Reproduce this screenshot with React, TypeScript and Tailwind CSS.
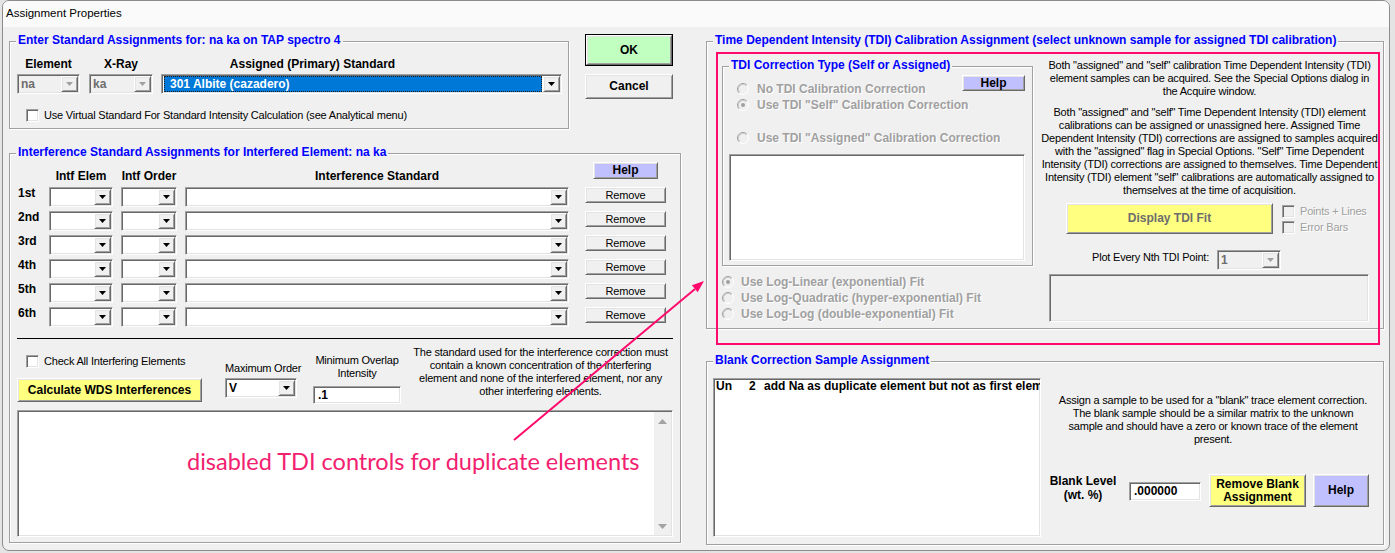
import React from "react";

const BOLD = "font-['Liberation_Sans',Arial,sans-serif] font-bold text-[12px] leading-[15px]";
const REG = "font-['Liberation_Sans',Arial,sans-serif] text-[11px] leading-[13px] tracking-[-0.2px]";
const SUNKEN =
  "border border-t-[#a0a0a0] border-l-[#a0a0a0] border-r-white border-b-white shadow-[inset_1px_1px_0_#696969,inset_-1px_-1px_0_#e3e3e3]";
const RAISED =
  "border border-t-white border-l-white border-r-[#696969] border-b-[#696969] shadow-[inset_1px_1px_0_#e3e3e3,inset_-1px_-1px_0_#a0a0a0]";
const DIS = "text-[#a0a0a0] [text-shadow:1px_1px_0_#fff]";

function Tri({ color = "#000" }: { color?: string }) {
  return (
    <svg width="7" height="4" viewBox="0 0 7 4">
      <polygon points="0,0 7,0 3.5,4" fill={color} />
    </svg>
  );
}

function DropBtn({ disabled = false }: { disabled?: boolean }) {
  return (
    <div className={`${RAISED} w-[17px] h-full shrink-0 bg-[#f0f0f0] flex items-center justify-center`}>
      <Tri color={disabled ? "#a0a0a0" : "#000"} />
    </div>
  );
}

function Combo({
  className = "",
  value = "",
  disabled = false,
  selected = false,
}: {
  className?: string;
  value?: string;
  disabled?: boolean;
  selected?: boolean;
}) {
  return (
    <div className={`${SUNKEN} p-[1px] h-[20px] flex shrink-0 ${disabled ? "bg-[#f0f0f0]" : "bg-white"} ${className}`}>
      {selected ? (
        <div className="flex-1 ml-[1px] mr-[1px] border border-dotted border-[#1e1e1e] bg-[#0078d7] text-white pl-[5px] flex items-center overflow-hidden">
          <span className={`${BOLD} whitespace-nowrap`}>{value}</span>
        </div>
      ) : (
        <div className={`flex-1 pl-[2px] flex items-center overflow-hidden ${disabled ? "text-[#6d6d6d]" : "text-black"}`}>
          <span className={`${BOLD} whitespace-nowrap`}>{value}</span>
        </div>
      )}
      <DropBtn disabled={disabled} />
    </div>
  );
}

function TextBox({ className = "", value = "" }: { className?: string; value?: string }) {
  return (
    <div className={`${SUNKEN} bg-white pl-[4px] pt-[1px] flex items-start overflow-hidden shrink-0 ${className}`}>
      <span className={`${BOLD} text-black whitespace-nowrap`}>{value}</span>
    </div>
  );
}

function CheckBox({ disabled = false }: { disabled?: boolean }) {
  return <div className={`${SUNKEN} w-[13px] h-[13px] shrink-0 ${disabled ? "bg-[#f0f0f0]" : "bg-white"}`} />;
}

function Check({ label, disabled = false, className = "" }: { label: string; disabled?: boolean; className?: string }) {
  return (
    <div className={`flex items-center h-[13px] ${className}`}>
      <CheckBox disabled={disabled} />
      <span className={`${REG} ml-[5px] whitespace-nowrap ${disabled ? DIS : "text-black"}`}>{label}</span>
    </div>
  );
}

function Radio({
  label,
  checked = false,
  gap = "ml-[8px]",
  className = "",
}: {
  label: string;
  checked?: boolean;
  gap?: string;
  className?: string;
}) {
  return (
    <div className={`flex items-center h-[16px] ${className}`}>
      <svg width="12" height="12" viewBox="0 0 12 12" className="shrink-0">
        <circle cx="6" cy="6" r="5.5" fill="#f0f0f0" />
        <path d="M2.11 9.89 A5.5 5.5 0 0 1 9.89 2.11" fill="none" stroke="#a0a0a0" strokeWidth="1" />
        <path d="M9.89 2.11 A5.5 5.5 0 0 1 2.11 9.89" fill="none" stroke="#ffffff" strokeWidth="1" />
        <path d="M2.82 9.18 A4.5 4.5 0 0 1 9.18 2.82" fill="none" stroke="#c8c8c8" strokeWidth="1" />
        {checked && <circle cx="6" cy="6" r="2" fill="#a0a0a0" />}
      </svg>
      <span className={`${BOLD} ${DIS} ${gap} whitespace-nowrap`}>{label}</span>
    </div>
  );
}

function Btn({ className = "", children }: { className?: string; children: React.ReactNode }) {
  return (
    <div className={`${RAISED} flex items-center justify-center text-center shrink-0 ${className}`}>{children}</div>
  );
}

function Group({ title, className = "", children }: { title: string; className?: string; children?: React.ReactNode }) {
  return (
    <div className={`relative border border-[#a0a0a0] shadow-[inset_1px_1px_0_#fff,1px_1px_0_#fff] shrink-0 ${className}`}>
      <span className={`absolute left-[6px] -top-[9px] px-[2px] bg-[#f0f0f0] text-[#0000ff] whitespace-nowrap ${BOLD}`}>
        {title}
      </span>
      {children}
    </div>
  );
}

function Lines({ lines, className = "" }: { lines: string[]; className?: string }) {
  return (
    <div className={`${REG} text-black text-center whitespace-nowrap ${className}`}>
      {lines.map((l, i) => (
        <div key={i}>{l}</div>
      ))}
    </div>
  );
}

const ROWS = ["1st", "2nd", "3rd", "4th", "5th", "6th"];

export default function App() {
  return (
    <div className="relative w-[1395px] h-[553px] overflow-hidden bg-[#e4e4e4]">
      <div className="ml-[2px] w-[1388px] h-[551px] border border-[#8c8c8c] rounded-[7px] bg-[#f0f0f0] flex flex-col overflow-hidden">
        {/* title bar */}
        <div className="h-[26px] bg-[#fafafa] flex items-center pl-[3px] shrink-0">
          <span className="font-['Liberation_Sans',Arial,sans-serif] text-[11.5px] text-black">Assignment Properties</span>
        </div>

        {/* body */}
        <div className="flex pl-[6px]">
          {/* LEFT COLUMN */}
          <div className="w-[672px] flex flex-col shrink-0">
            <div className="flex items-start mt-[7px]">
              <Group title="Enter Standard Assignments for: na ka on TAP spectro 4" className="w-[560px] h-[88px] mt-[7px]">
                <div className="flex flex-col pl-[7px]">
                  <div className={`flex mt-[15px] h-[15px] ${BOLD} text-black`}>
                    <div className="w-[63px] text-center">Element</div>
                    <div className="w-[64px] ml-[9px] text-center">X-Ray</div>
                    <div className="w-[303px] ml-[8px] text-center">Assigned (Primary) Standard</div>
                  </div>
                  <div className="flex mt-[2px]">
                    <Combo className="w-[63px]" value="na" disabled />
                    <Combo className="w-[64px] ml-[9px]" value="ka" disabled />
                    <Combo className="w-[401px] ml-[8px]" value="301 Albite (cazadero)" selected />
                  </div>
                  <Check
                    className="mt-[15px] ml-[9px]"
                    label="Use Virtual Standard For Standard Intensity Calculation (see Analytical menu)"
                  />
                </div>
              </Group>
              <div className="ml-[16px] flex flex-col gap-[8px] w-[88px]">
                <div className="border border-black h-[32px] flex">
                  <div className={`${RAISED} flex-1 bg-[#c0ffc0] flex items-center justify-center ${BOLD} text-black`}>OK</div>
                </div>
                <Btn className={`h-[25px] w-[88px] bg-[#f0f0f0] ${BOLD} text-black`}>Cancel</Btn>
              </div>
            </div>

            <Group
              title="Interference Standard Assignments for Interfered Element: na ka"
              className="w-[672px] h-[390px] mt-[24px]"
            >
              <div className="flex flex-col px-[7px]">
                <div className={`flex h-[33px] ${BOLD} text-black`}>
                  <div className="w-[32px]" />
                  <div className="w-[64px] self-end mb-[3px] text-center">Intf Elem</div>
                  <div className="w-[56px] ml-[8px] self-end mb-[3px] text-center whitespace-nowrap">Intf Order</div>
                  <div className="w-[384px] ml-[8px] self-end mb-[3px] text-center">Interference Standard</div>
                  <div className="w-[81px] ml-[16px] flex justify-center items-start pt-[8px]">
                    <Btn className="w-[65px] h-[17px] bg-[#c0c0ff]">Help</Btn>
                  </div>
                </div>
                <div className="flex flex-col gap-[4px]">
                  {ROWS.map((r) => (
                    <div key={r} className="flex items-start h-[20px]">
                      <div className={`w-[32px] pl-[1px] -mt-[1px] ${BOLD} text-black`}>{r}</div>
                      <Combo className="w-[64px]" />
                      <Combo className="w-[56px] ml-[8px]" />
                      <Combo className="w-[384px] ml-[8px]" />
                      <Btn className={`w-[81px] h-[16px] ml-[16px] bg-[#f0f0f0] ${REG} text-black`}>Remove</Btn>
                    </div>
                  ))}
                </div>
                <div className="mt-[11px] h-px bg-black" />
                <div className="flex items-start">
                  <div className="w-[185px] flex flex-col">
                    <Check className="mt-[16px] ml-[9px]" label="Check All Interfering Elements" />
                    <Btn className={`mt-[10px] h-[24px] w-[185px] bg-[#ffff80] ${BOLD} text-black`}>
                      Calculate WDS Interferences
                    </Btn>
                  </div>
                  <div className="ml-[23px] w-[73px] flex flex-col">
                    <div className={`${REG} mt-[23px] whitespace-nowrap text-black`}>Maximum Order</div>
                    <Combo className="mt-[3px] w-[72px]" value="V" />
                  </div>
                  <div className="ml-[15px] w-[88px] flex flex-col items-center">
                    <Lines className="mt-[15px]" lines={["Minimum Overlap", "Intensity"]} />
                    <TextBox className="mt-[6px] w-[88px] h-[18px]" value=".1" />
                  </div>
                  <Lines
                    className="ml-[12px] w-[255px] mt-[7px]"
                    lines={[
                      "The standard used for the interference correction must",
                      "contain a known concentration of the interfering",
                      "element and none of the interfered element, nor any",
                      "other interfering elements.",
                    ]}
                  />
                </div>
                <div className={`${SUNKEN} p-[1px] mt-[6px] h-[127px] bg-white flex justify-end`}>
                  <div className="w-[17px] h-full bg-[#f0f0f0] flex flex-col justify-between items-center pt-[7px] pb-[6px]">
                    <svg width="9" height="5" viewBox="0 0 9 5">
                      <polygon points="0,5 9,5 4.5,0" fill="#a3a3a3" />
                    </svg>
                    <svg width="9" height="5" viewBox="0 0 9 5">
                      <polygon points="0,0 9,0 4.5,5" fill="#a3a3a3" />
                    </svg>
                  </div>
                </div>
              </div>
            </Group>
          </div>

          {/* RIGHT COLUMN */}
          <div className="w-[678px] ml-[25px] flex flex-col shrink-0">
            <Group
              title="Time Dependent Intensity (TDI) Calibration Assignment (select unknown sample for assigned TDI calibration)"
              className="mt-[14px] h-[288px]"
            >
              <div className="flex pl-[15px]">
                <div className="w-[311px] flex flex-col shrink-0">
                  <Group title="TDI Correction Type (Self or Assigned)" className="mt-[24px] h-[200px] w-[311px]">
                    <div className="flex flex-col pl-[6px] w-[302px]">
                      <div className="flex items-start w-[296px]">
                        <div className="flex flex-col mt-[14px] ml-[8px] w-[200px]">
                          <Radio label="No TDI Calibration Correction" />
                          <Radio checked label={'Use TDI "Self" Calibration Correction'} />
                          <Radio className="mt-[17px]" label={'Use TDI "Assigned" Calibration Correction'} />
                        </div>
                        <Btn className={`ml-auto mt-[8px] w-[63px] h-[16px] bg-[#c0c0ff] ${BOLD} text-black`}>Help</Btn>
                      </div>
                      <div className={`${SUNKEN} mt-[8px] h-[107px] w-[296px] bg-white`} />
                    </div>
                  </Group>
                  <div className="flex flex-col mt-[8px]">
                    <Radio gap="ml-[7px]" checked label="Use Log-Linear (exponential) Fit" />
                    <Radio gap="ml-[7px]" label="Use Log-Quadratic (hyper-exponential) Fit" />
                    <Radio gap="ml-[7px]" label="Use Log-Log (double-exponential) Fit" />
                  </div>
                </div>
                <div className="ml-[8px] w-[337px] flex flex-col items-center shrink-0">
                  <Lines
                    className="mt-[17px]"
                    lines={[
                      'Both "assigned" and "self" calibration Time Dependent Intensity (TDI)',
                      "element samples can be acquired. See the Special Options dialog in",
                      "the Acquire window.",
                    ]}
                  />
                  <Lines
                    className="mt-[8px]"
                    lines={[
                      'Both "assigned" and "self" Time Dependent Intensity (TDI) element',
                      "calibrations can be assigned or unassigned here. Assigned Time",
                      "Dependent Intensity (TDI) corrections are assigned to samples acquired",
                      'with the "assigned" flag in Special Options. "Self" Time Dependent',
                      "Intensity (TDI) corrections are assigned to themselves. Time Dependent",
                      'Intensity (TDI) element "self" calibrations are automatically assigned to',
                      "themselves at the time of acquisition.",
                    ]}
                  />
                  <div className="flex items-start mt-[6px] self-start ml-[25px]">
                    <Btn className={`w-[207px] h-[31px] bg-[#ffff80] ${BOLD} text-[#6d6d6d]`}>Display TDI Fit</Btn>
                    <div className="ml-[9px] flex flex-col mt-[2px] gap-[3px]">
                      <Check disabled label="Points + Lines" />
                      <Check disabled label="Error Bars" />
                    </div>
                  </div>
                  <div className="flex items-start mt-[16px] self-start ml-[51px]">
                    <div className={`${REG} w-[125px] pt-[1px] whitespace-nowrap text-black`}>Plot Every Nth TDI Point:</div>
                    <Combo className="w-[64px]" value="1" disabled />
                  </div>
                  <div className={`${SUNKEN} mt-[4px] self-start ml-[8px] w-[320px] h-[48px]`} />
                </div>
              </div>
            </Group>

            <Group title="Blank Correction Sample Assignment" className="mt-[32px] h-[184px]">
              <div className="flex">
                <div className={`${SUNKEN} ml-[6px] mt-[16px] w-[328px] h-[159px] bg-white pl-[2px] overflow-hidden shrink-0`}>
                  <div className={`flex ${BOLD} text-black whitespace-nowrap`}>
                    <span className="w-[33px] shrink-0">Un</span>
                    <span className="w-[15px] shrink-0">2</span>
                    <span>add Na as duplicate element but not as first element</span>
                  </div>
                </div>
                <div className="ml-[8px] w-[328px] flex flex-col shrink-0">
                  <Lines
                    className="mt-[32px]"
                    lines={[
                      'Assign a sample to be used for a "blank" trace element correction.',
                      "The blank sample should be a similar matrix to the unknown",
                      "sample and should have a zero or known trace of the element",
                      "present.",
                    ]}
                  />
                  <div className="flex items-start mt-[28px]">
                    <div className="w-[68px] text-center font-['Liberation_Sans',Arial,sans-serif] font-bold text-[12px] leading-[14px] text-black whitespace-nowrap">
                      Blank Level
                      <br />
                      (wt. %)
                    </div>
                    <TextBox className="ml-[12px] mt-[8px] w-[72px] h-[19px]" value=".000000" />
                    <Btn className="ml-[8px] w-[97px] h-[33px] bg-[#ffff80] font-['Liberation_Sans',Arial,sans-serif] font-bold text-[12px] leading-[13px] text-black">
                      Remove Blank
                      <br />
                      Assignment
                    </Btn>
                    <Btn className={`ml-[7px] w-[56px] h-[33px] bg-[#c0c0ff] ${BOLD} text-black`}>Help</Btn>
                  </div>
                </div>
              </div>
            </Group>
          </div>
        </div>
      </div>

      {/* annotation overlays */}
      <div className="absolute left-[716px] top-[52px] w-[664px] h-[293px] border-2 border-[#ff0a6c] pointer-events-none" />
      <svg className="absolute left-0 top-0 pointer-events-none" width="1395" height="553" viewBox="0 0 1395 553">
        <line x1="514" y1="440" x2="695" y2="289" stroke="#ff0a6c" strokeWidth="2" />
        <polygon points="704,281 697.7,292.2 691.9,285.3" fill="#ff0a6c" />
      </svg>
      <div className="absolute left-[187px] top-[450px] font-['Lato','Open_Sans',sans-serif] text-[23.5px] leading-[23.5px] text-[#f2206e] whitespace-nowrap">
        disabled TDI controls for duplicate elements
      </div>
    </div>
  );
}
